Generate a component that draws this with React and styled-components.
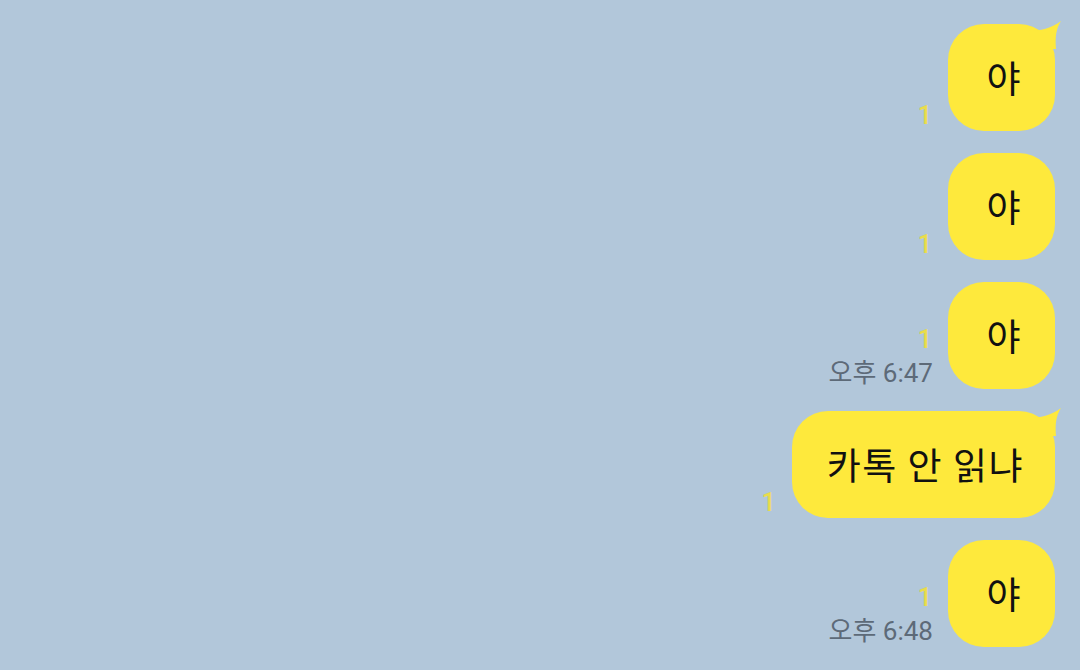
import React from "react";
import styled, { createGlobalStyle } from "styled-components";

const Global = createGlobalStyle`
  html, body { margin: 0; padding: 0; background: #b2c7da; }
  body { font-family: "Noto Sans CJK KR", "Noto Sans", sans-serif; }
`;

const Chat = styled.div`
  width: 1080px;
  height: 670px;
  box-sizing: border-box;
  padding: 24px 25px 0 0;
  display: flex;
  flex-direction: column;
  align-items: flex-end;
  gap: 22px;
  overflow: hidden;
`;

const Row = styled.div`
  display: flex;
  align-items: flex-end;
  gap: 15px;
`;

const Meta = styled.div`
  display: flex;
  flex-direction: column;
  align-items: flex-end;
  padding-bottom: ${(p) => (p.$time ? "1px" : "4px")};
`;

const Unread = styled.span`
  font-family: Roboto, "Noto Sans CJK KR", sans-serif;
  font-size: 25px;
  line-height: 22px;
  color: #e9dc4b;
  font-weight: 500;
  margin-right: 1px;
`;

const Time = styled.span`
  font-family: Roboto, "Noto Sans CJK KR", sans-serif;
  font-size: 26px;
  line-height: 30px;
  color: #5d6a78;
  margin-top: 7px;
  white-space: nowrap;
`;

const Bubble = styled.div`
  position: relative;
  box-sizing: border-box;
  min-width: 107px;
  height: 107px;
  padding: 0 31px 2px 35px;
  border-radius: 36px;
  background: #fee93c;
  display: flex;
  align-items: center;
  justify-content: center;
  font-family: "Noto Sans CJK KR", sans-serif;
  font-size: 37px;
  letter-spacing: ${(p) => (p.$wide ? "1.5px" : "0")};
  color: #111;
  white-space: nowrap;
`;

const Tail = styled.svg`
  position: absolute;
  right: -5px;
  top: -3px;
  width: 32px;
  height: 32px;
  overflow: visible;
`;

function Message({ text, first, time }) {
  return (
    <Row>
      <Meta $time={!!time}>
        <Unread>1</Unread>
        {time && <Time>{time}</Time>}
      </Meta>
      <Bubble $wide={text.length > 2}>
        {first && (
          <Tail viewBox="0 0 32 32">
            <path d="M0 10 C12 10 24 7 33 0 C28 8 27 16 28 28 L8 28 Z" fill="#fee93c" />
          </Tail>
        )}
        {text}
      </Bubble>
    </Row>
  );
}

export default function App() {
  return (
    <>
      <Global />
      <Chat>
        <Message text="야" first />
        <Message text="야" />
        <Message text="야" time="오후 6:47" />
        <Message text="카톡 안 읽냐" first />
        <Message text="야" time="오후 6:48" />
      </Chat>
    </>
  );
}
